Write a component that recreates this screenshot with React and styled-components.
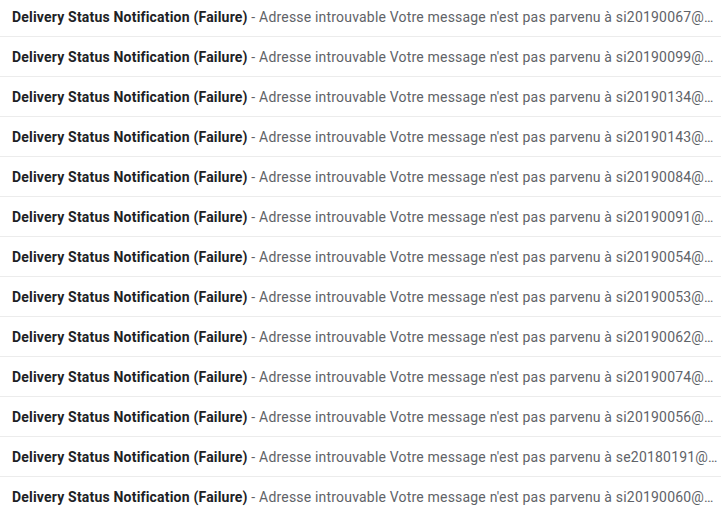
import React from "react";
import styled, { createGlobalStyle } from "styled-components";

const Global = createGlobalStyle`
  html, body { margin: 0; padding: 0; background: #fff; overflow: hidden; }
  body { font-family: Roboto, "Liberation Sans", Arial, sans-serif; }
`;

const List = styled.div`
  display: flex;
  flex-direction: column;
  margin-top: -3px;
  width: 721px;
`;

const Row = styled.div`
  height: 39px;
  border-bottom: 1px solid #ececec;
  display: flex;
  align-items: center;
  padding: 0 0 0 12px;
  box-sizing: content-box;
  width: 709px;
`;

const Line = styled.div`
  white-space: nowrap;
  overflow: hidden;
  text-overflow: ellipsis;
  font-size: 14px;
  line-height: 20px;
  letter-spacing: 0.19px;
  color: #5f6368;
  width: 100%;
`;

const Subject = styled.span`
  font-weight: 700;
  color: #202124;
`;

const ids = [
  "si20190067", "si20190099", "si20190134", "si20190143", "si20190084",
  "si20190091", "si20190054", "si20190053", "si20190062", "si20190074",
  "si20190056", "se20180191", "si20190060",
];

export default function App() {
  return (
    <>
      <Global />
      <List>
        {ids.map((id) => (
          <Row key={id}>
            <Line>
              <Subject>Delivery Status Notification (Failure)</Subject>
              {" - Adresse introuvable Votre message n'est pas parvenu à "}
              {id}@…
            </Line>
          </Row>
        ))}
      </List>
    </>
  );
}
